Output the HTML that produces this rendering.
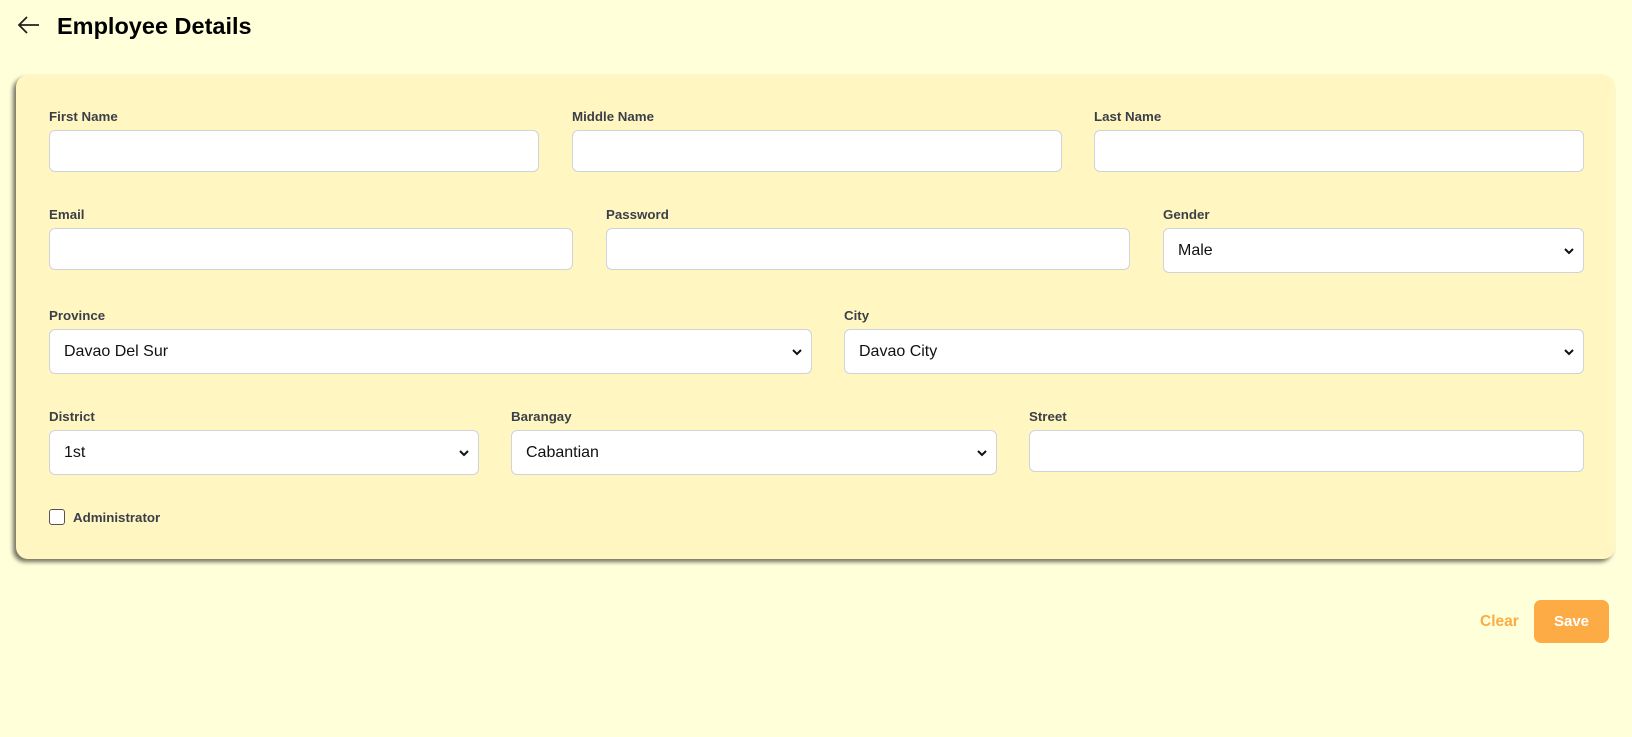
<!DOCTYPE html>
<html><head><meta charset="utf-8"><style>
*{box-sizing:border-box;margin:0;padding:0}
body{width:1632px;height:737px;background:#ffffd9;font-family:"Liberation Sans",Arial,sans-serif;position:relative;overflow:hidden}
.abs{position:absolute}
h1{position:absolute;left:57px;top:13px;font-size:23.5px;font-weight:bold;color:#000}
.card{position:absolute;left:16px;top:75px;width:1599px;height:484px;background:#fff6c1;border-radius:12px;box-shadow:-3px 3px 4px rgba(0,0,0,.55)}
.lbl{position:absolute;font-size:13.3px;font-weight:bold;color:#3b3f48;line-height:16px}
.in{position:absolute;background:#fff;border:1px solid #cfd3da;border-radius:6px}
.sel{font-size:16px;color:#111;padding-left:14px;display:flex;align-items:center}
.sel svg{position:absolute;right:9px;top:50%;margin-top:-4px}
.btn{position:absolute;left:1534px;top:600px;width:75px;height:43px;background:#fdab44;border-radius:7px;color:#fff;font-weight:bold;font-size:15px;display:flex;align-items:center;justify-content:center}
</style></head><body>
<svg class="abs" style="left:17px;top:15px" width="24" height="20" viewBox="0 0 24 20"><path d="M22 10H3M10 2L2 10L10 18" fill="none" stroke="#222" stroke-width="1.8"/></svg>
<h1>Employee Details</h1>
<div class="card"></div>

<div class="lbl" style="left:49px;top:109px">First Name</div>
<div class="lbl" style="left:572px;top:109px">Middle Name</div>
<div class="lbl" style="left:1094px;top:109px">Last Name</div>
<div class="in" style="left:49px;top:130px;width:490px;height:42px"></div>
<div class="in" style="left:572px;top:130px;width:490px;height:42px"></div>
<div class="in" style="left:1094px;top:130px;width:490px;height:42px"></div>

<div class="lbl" style="left:49px;top:207px">Email</div>
<div class="lbl" style="left:606px;top:207px">Password</div>
<div class="lbl" style="left:1163px;top:207px">Gender</div>
<div class="in" style="left:49px;top:228px;width:524px;height:42px"></div>
<div class="in" style="left:606px;top:228px;width:524px;height:42px"></div>
<div class="in sel" style="left:1163px;top:228px;width:421px;height:45px">Male<svg width="10" height="8" viewBox="0 0 10 8"><path d="M1 2L5 6L9 2" fill="none" stroke="#111" stroke-width="2"/></svg></div>

<div class="lbl" style="left:49px;top:308px">Province</div>
<div class="lbl" style="left:844px;top:308px">City</div>
<div class="in sel" style="left:49px;top:329px;width:763px;height:45px">Davao Del Sur<svg width="10" height="8" viewBox="0 0 10 8"><path d="M1 2L5 6L9 2" fill="none" stroke="#111" stroke-width="2"/></svg></div>
<div class="in sel" style="left:844px;top:329px;width:740px;height:45px">Davao City<svg width="10" height="8" viewBox="0 0 10 8"><path d="M1 2L5 6L9 2" fill="none" stroke="#111" stroke-width="2"/></svg></div>

<div class="lbl" style="left:49px;top:409px">District</div>
<div class="lbl" style="left:511px;top:409px">Barangay</div>
<div class="lbl" style="left:1029px;top:409px">Street</div>
<div class="in sel" style="left:49px;top:430px;width:430px;height:45px">1st<svg width="10" height="8" viewBox="0 0 10 8"><path d="M1 2L5 6L9 2" fill="none" stroke="#111" stroke-width="2"/></svg></div>
<div class="in sel" style="left:511px;top:430px;width:486px;height:45px">Cabantian<svg width="10" height="8" viewBox="0 0 10 8"><path d="M1 2L5 6L9 2" fill="none" stroke="#111" stroke-width="2"/></svg></div>
<div class="in" style="left:1029px;top:430px;width:555px;height:42px"></div>

<div class="abs" style="left:49px;top:509px;width:16px;height:16px;border:1px solid #555;border-radius:3px;background:#fff"></div>
<div class="lbl" style="left:73px;top:510px">Administrator</div>

<div class="abs" style="left:1480px;top:613px;font-size:15.5px;font-weight:bold;color:#fdab44">Clear</div>
<div class="btn">Save</div>
</body></html>
